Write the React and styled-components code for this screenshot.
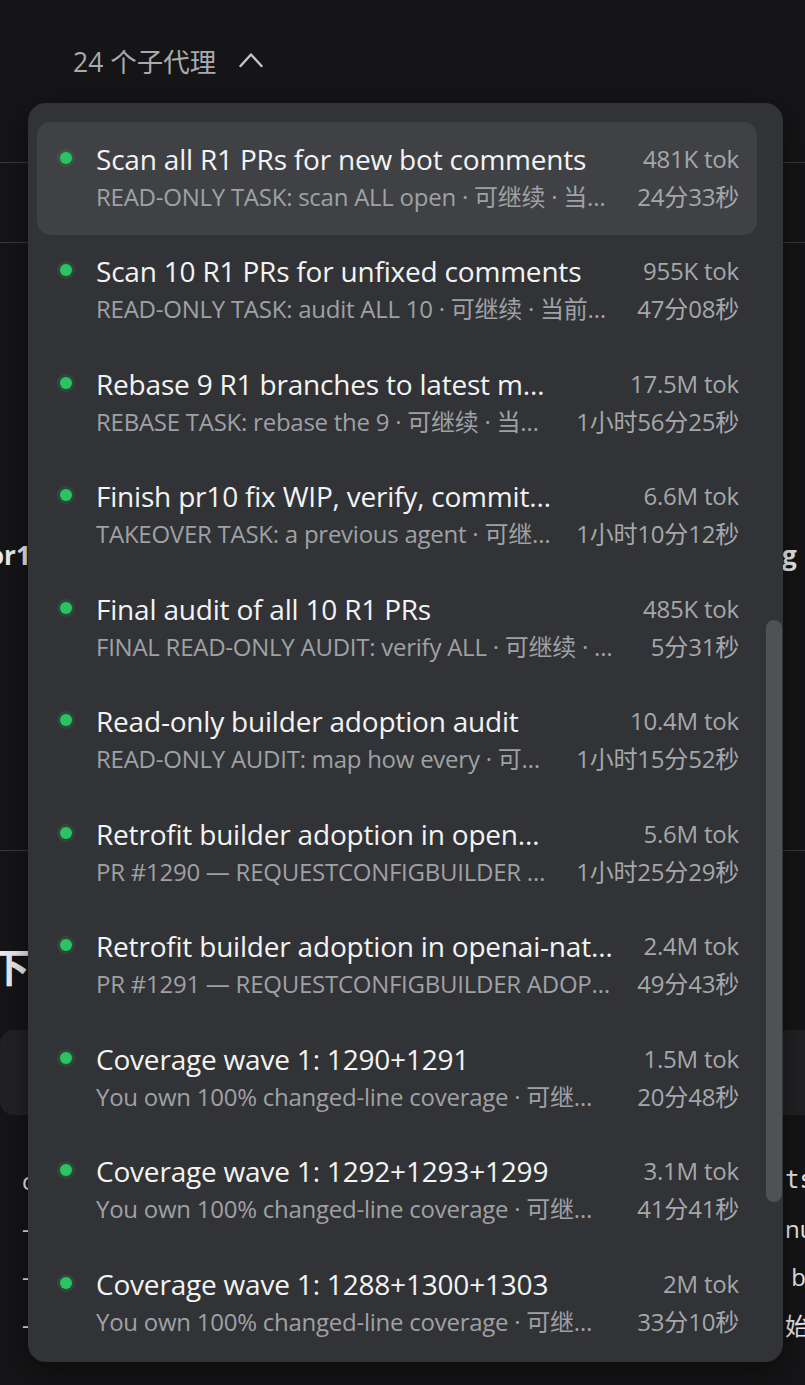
import React from "react";
import styled, { createGlobalStyle } from "styled-components";

const FONT = `"Open Sans", "Noto Sans CJK SC", sans-serif`;

const GlobalStyle = createGlobalStyle`
  html, body { margin: 0; padding: 0; background: #151517; }
  body { font-family: ${FONT}; -webkit-font-smoothing: antialiased; }
  * { box-sizing: border-box; }
`;

const Page = styled.div`
  position: relative;
  width: 805px;
  height: 1385px;
  overflow: hidden;
  background: #151517;
  color: #ececec;
`;

/* ---------- background page (mostly hidden behind the popup) ---------- */

const Header = styled.header`
  height: 163px;
  border-bottom: 1px solid #3a3a3d;
  padding: 38px 0 0 73px;
`;

const Toggle = styled.button`
  display: inline-flex;
  align-items: center;
  gap: 23px;
  height: 44px;
  padding: 0;
  border: 0;
  background: none;
  color: #a9aaad;
  font-family: ${FONT};
  font-size: 26.5px;
  cursor: pointer;
`;

const Band = styled.div`
  height: 80px;
  border-bottom: 1px solid #3a3a3d;
`;

const Section = styled.section`
  height: ${(p) => p.$h}px;
  padding-top: ${(p) => p.$pt || 0}px;
  border-bottom: ${(p) => (p.$line ? "1px solid #3a3a3d" : "0")};
`;

const BgLine = styled.div`
  display: flex;
  justify-content: space-between;
  align-items: center;
  height: ${(p) => p.$h || 48}px;
  padding-left: ${(p) => p.$pl || 0}px;
  font-size: ${(p) => p.$size || 24}px;
  font-weight: ${(p) => p.$weight || 400};
  color: #ededed;
  white-space: nowrap;
`;

const LeftFrag = styled.span`
  margin-left: ${(p) => p.$ml || 0}px;
`;

const RightFrag = styled.span`
  width: ${(p) => p.$w || 20}px;
  overflow: visible;
  font-family: ${(p) => (p.$mono ? `"DejaVu Sans Mono", monospace` : FONT)};
`;

const Card = styled.div`
  height: 85px;
  margin-top: 41px;
  background: #222224;
  border-radius: 14px 0 0 14px;
`;

const BgList = styled.div`
  margin-top: 41px;
`;

/* ---------- popup ---------- */

const Popup = styled.div`
  position: absolute;
  top: 103px;
  left: 28px;
  width: 755px;
  height: 1259px;
  display: flex;
  background: #323336;
  border-radius: 18px;
  box-shadow: 0 10px 30px rgba(0, 0, 0, 0.45);
  overflow: hidden;
`;

const List = styled.div`
  flex: 1;
  min-width: 0;
  padding: 19px 0 0 9px;
`;

const ScrollTrack = styled.div`
  width: 26px;
  flex: none;
  padding: 517px 1px 0 9px;
`;

const Thumb = styled.div`
  width: 16px;
  height: 582px;
  border-radius: 8px;
  background: #505154;
`;

const Row = styled.div`
  display: grid;
  grid-template-columns: 36px minmax(0, 1fr) auto;
  grid-template-rows: 36px 32px;
  row-gap: 4px;
  align-content: center;
  height: 112.5px;
  padding: 0 18px 3px 23px;
  border-radius: 14px;
  background: ${(p) => (p.$active ? "#404144" : "transparent")};
`;

const Dot = styled.span`
  align-self: center;
  width: 12px;
  height: 12px;
  margin-top: -2px;
  border-radius: 50%;
  background: #2ac461;
  box-shadow: 0 0 0 3px rgba(42, 196, 97, 0.14);
`;

const Title = styled.div`
  grid-column: 2;
  font-size: 28px;
  line-height: 36px;
  letter-spacing: -0.2px;
  color: #f3f3f3;
  white-space: nowrap;
  overflow: hidden;
  text-overflow: ellipsis;
`;

const Sub = styled.div`
  grid-column: 2;
  font-size: 24px;
  line-height: 32px;
  letter-spacing: -0.25px;
  color: #9fa1a5;
  white-space: nowrap;
  overflow: hidden;
  text-overflow: ellipsis;
`;

const Meta = styled.div`
  grid-column: 3;
  padding-left: 16px;
  text-align: right;
  font-size: 24px;
  line-height: ${(p) => (p.$top ? 36 : 32)}px;
  letter-spacing: -0.2px;
  color: #a5a7ab;
  white-space: nowrap;
`;

const ChevronUp = () => (
  <svg width="24" height="16" viewBox="0 0 24 16" fill="none">
    <polyline
      points="1.5,14 12,2.5 22.5,14"
      stroke="#c6c6c8"
      strokeWidth="2.4"
      strokeLinecap="round"
      strokeLinejoin="round"
    />
  </svg>
);

const COV = "You own 100% changed-line coverage · 可继…";

const agents = [
  { title: "Scan all R1 PRs for new bot comments", sub: "READ-ONLY TASK: scan ALL open · 可继续 · 当…", tok: "481K tok", time: "24分33秒", active: true },
  { title: "Scan 10 R1 PRs for unfixed comments", sub: "READ-ONLY TASK: audit ALL 10 · 可继续 · 当前…", tok: "955K tok", time: "47分08秒" },
  { title: "Rebase 9 R1 branches to latest m…", sub: "REBASE TASK: rebase the 9 · 可继续 · 当…", tok: "17.5M tok", time: "1小时56分25秒" },
  { title: "Finish pr10 fix WIP, verify, commit…", sub: "TAKEOVER TASK: a previous agent · 可继…", tok: "6.6M tok", time: "1小时10分12秒" },
  { title: "Final audit of all 10 R1 PRs", sub: "FINAL READ-ONLY AUDIT: verify ALL · 可继续 · …", tok: "485K tok", time: "5分31秒" },
  { title: "Read-only builder adoption audit", sub: "READ-ONLY AUDIT: map how every · 可…", tok: "10.4M tok", time: "1小时15分52秒" },
  { title: "Retrofit builder adoption in open…", sub: "PR #1290 — REQUESTCONFIGBUILDER …", tok: "5.6M tok", time: "1小时25分29秒" },
  { title: "Retrofit builder adoption in openai-nat…", sub: "PR #1291 — REQUESTCONFIGBUILDER ADOP…", tok: "2.4M tok", time: "49分43秒" },
  { title: "Coverage wave 1: 1290+1291", sub: COV, tok: "1.5M tok", time: "20分48秒" },
  { title: "Coverage wave 1: 1292+1293+1299", sub: COV, tok: "3.1M tok", time: "41分41秒" },
  { title: "Coverage wave 1: 1288+1300+1303", sub: COV, tok: "2M tok", time: "33分10秒" },
];

export default function App() {
  return (
    <>
      <GlobalStyle />
      <Page>
        <Header>
          <Toggle type="button">
            <span>24 个子代理</span>
            <ChevronUp />
          </Toggle>
        </Header>
        <Band />
        <Section $h={608} $pt={296} $line>
          <BgLine $h={32} $size={26} $weight={700}>
            <LeftFrag $ml={-12}>or1</LeftFrag>
            <RightFrag $w={23}>g</RightFrag>
          </BgLine>
        </Section>
        <Section $h={534} $pt={90}>
          <BgLine $h={48} $size={40} $weight={700}>
            <LeftFrag $ml={-10}>下</LeftFrag>
          </BgLine>
          <Card />
          <BgList>
            <BgLine $pl={22}>
              <LeftFrag>c</LeftFrag>
              <RightFrag $mono>ts</RightFrag>
            </BgLine>
            <BgLine $pl={22}>
              <LeftFrag>-</LeftFrag>
              <RightFrag>nu</RightFrag>
            </BgLine>
            <BgLine $pl={22}>
              <LeftFrag>-</LeftFrag>
              <RightFrag>&nbsp;b</RightFrag>
            </BgLine>
            <BgLine $pl={22}>
              <LeftFrag>-</LeftFrag>
              <RightFrag>始</RightFrag>
            </BgLine>
          </BgList>
        </Section>

        <Popup role="menu">
          <List>
            {agents.map((a, i) => (
              <Row key={i} $active={a.active}>
                <Dot />
                <Title>{a.title}</Title>
                <Meta $top>{a.tok}</Meta>
                <Sub>{a.sub}</Sub>
                <Meta>{a.time}</Meta>
              </Row>
            ))}
          </List>
          <ScrollTrack>
            <Thumb />
          </ScrollTrack>
        </Popup>
      </Page>
    </>
  );
}
